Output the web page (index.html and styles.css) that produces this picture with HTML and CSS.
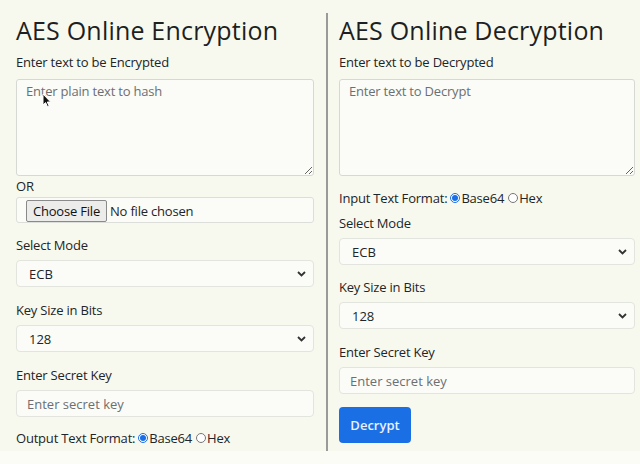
FILE: index.html
```html
<!DOCTYPE html>
<html lang="en">
<head>
<meta charset="utf-8">
<title>AES Online Encryption and Decryption</title>
<link rel="stylesheet" href="styles.css">
</head>
<body>
<main class="tool">
  <section class="col col-enc">
    <h1 class="title">AES Online Encryption</h1>
    <label class="lbl lbl-top" for="plain">Enter text to be Encrypted</label>
    <div class="area-wrap">
      <textarea id="plain" class="area" placeholder="Enter plain text to hash"></textarea>
      <svg class="cursor" width="10" height="16" viewBox="0 0 10 16"><path d="M1 1 L1 12 L3.6 9.6 L5.6 14 L7.2 13.3 L5.3 9 L8.6 9 Z" fill="#111" stroke="#fff" stroke-width="1"/></svg>
    </div>
    <div class="lbl">OR</div>
    <div class="filebox"><span class="filebtn">Choose File</span><span class="filetext">No file chosen</span></div>
    <div class="field field-mode">
      <label class="lbl" for="mode1">Select Mode</label>
      <div class="sel-wrap">
        <select id="mode1" class="sel"><option>ECB</option></select>
        <svg class="chev" width="9" height="6" viewBox="0 0 9 6"><path d="M1 1 L4.5 4.5 L8 1" fill="none" stroke="#333" stroke-width="1.8"/></svg>
      </div>
    </div>
    <div class="field">
      <label class="lbl" for="size1">Key Size in Bits</label>
      <div class="sel-wrap">
        <select id="size1" class="sel"><option>128</option></select>
        <svg class="chev" width="9" height="6" viewBox="0 0 9 6"><path d="M1 1 L4.5 4.5 L8 1" fill="none" stroke="#333" stroke-width="1.8"/></svg>
      </div>
    </div>
    <div class="field">
      <label class="lbl" for="key1">Enter Secret Key</label>
      <input id="key1" class="inp" type="text" placeholder="Enter secret key">
    </div>
    <div class="radios radios-out">
      <span>Output Text Format:</span>
      <input type="radio" name="out" checked><span class="opt">Base64</span>
      <input type="radio" name="out"><span>Hex</span>
    </div>
  </section>
  <section class="col col-dec">
    <h1 class="title">AES Online Decryption</h1>
    <label class="lbl lbl-top" for="cipher">Enter text to be Decrypted</label>
    <div class="area-wrap">
      <textarea id="cipher" class="area" placeholder="Enter text to Decrypt"></textarea>
    </div>
    <div class="radios radios-in">
      <span>Input Text Format:</span>
      <input type="radio" name="in" checked><span class="opt">Base64</span>
      <input type="radio" name="in"><span>Hex</span>
    </div>
    <div class="field field-tight">
      <label class="lbl" for="mode2">Select Mode</label>
      <div class="sel-wrap">
        <select id="mode2" class="sel"><option>ECB</option></select>
        <svg class="chev" width="9" height="6" viewBox="0 0 9 6"><path d="M1 1 L4.5 4.5 L8 1" fill="none" stroke="#333" stroke-width="1.8"/></svg>
      </div>
    </div>
    <div class="field field-mid">
      <label class="lbl" for="size2">Key Size in Bits</label>
      <div class="sel-wrap">
        <select id="size2" class="sel"><option>128</option></select>
        <svg class="chev" width="9" height="6" viewBox="0 0 9 6"><path d="M1 1 L4.5 4.5 L8 1" fill="none" stroke="#333" stroke-width="1.8"/></svg>
      </div>
    </div>
    <div class="field">
      <label class="lbl" for="key2">Enter Secret Key</label>
      <input id="key2" class="inp" type="text" placeholder="Enter secret key">
    </div>
    <button class="btn" type="button">Decrypt</button>
  </section>
</main>
<footer class="foot"></footer>
</body>
</html>
```

FILE: styles.css
```css
* { box-sizing: border-box; }
html, body { margin: 0; padding: 0; }
body {
  background: #f8f9ee;
  font-family: "Open Sans", "DejaVu Sans", sans-serif;
  color: #212529;
  font-size: 13px;
  letter-spacing: -0.2px;
  height: 464px;
  overflow: hidden;
}
.tool {
  display: grid;
  grid-template-columns: 328px 1fr;
  padding-top: 13px;
  height: 451px;
}
.col { display: flex; flex-direction: column; }
.col-enc {
  padding: 0 12px 0 16px;
  border-right: 2px solid #9a9a9a;
}
.col-dec { padding: 0 5px 0 11px; }
.title {
  margin: 0;
  font-size: 25px;
  font-weight: 500;
  letter-spacing: 0.2px;
  line-height: 34px;
  color: #1d1f22;
  white-space: nowrap;
}
.lbl {
  display: block;
  line-height: 20px;
  font-size: 13px;
  margin: 0;
  white-space: nowrap;
}
.lbl-top { margin: 5px 0 7px; }
.area-wrap { position: relative; }
.area {
  display: block;
  width: 100%;
  height: 97px;
  border: 1px solid #d6d8d4;
  border-radius: 3px;
  background: #fbfcf7;
  padding: 2px 9px;
  font: inherit;
  font-size: 13px;
  letter-spacing: -0.2px;
  color: #212529;
  resize: vertical;
}
.area::placeholder, .inp::placeholder { color: #6b6f73; opacity: 1; }
.cursor { position: absolute; left: 26px; top: 14px; }
.filebox {
  margin-top: 1px;
  height: 26px;
  border: 1px solid #dcdeda;
  border-radius: 3px;
  background: #fbfcf7;
  display: flex;
  align-items: flex-end;
  padding: 0 0 0 9px;
  gap: 3px;
}
.filebtn {
  height: 22px;
  width: 81px;
  border: 1px solid #8a8a8a;
  border-radius: 2px;
  background: #ececea;
  color: #111;
  font-size: 13px;
  line-height: 20px;
  text-align: center;
}
.filetext { line-height: 22px; color: #212529; }
.field { margin-top: 13px; }
.field-mode { margin-top: 12px; }
.field-tight { margin-top: 5px; }
.field-mid { margin-top: 12px; }
.field .lbl { margin-bottom: 5px; }
.sel-wrap { position: relative; }
.sel {
  display: block;
  width: 100%;
  height: 27px;
  appearance: none;
  -webkit-appearance: none;
  border: 1px solid #e2e4de;
  border-radius: 4px;
  background: #fbfcf7;
  font: inherit;
  font-size: 13px;
  color: #212529;
  padding: 0 0 0 12px;
}
.chev { position: absolute; right: 8px; top: 11px; pointer-events: none; }
.inp {
  display: block;
  width: 100%;
  height: 27px;
  border: 1px solid #e2e4de;
  border-radius: 4px;
  background: #fbfcf7;
  font: inherit;
  font-size: 13px;
  padding: 0 10px;
  color: #212529;
}
.radios {
  display: flex;
  align-items: center;
  line-height: 20px;
  white-space: nowrap;
}
.radios input {
  width: 10px;
  height: 10px;
  margin: 0 1px 0 3px;
  accent-color: #1a6ee6;
}
.radios .opt { margin-right: 1px; }
.radios-out { margin-top: 11px; }
.radios-in { margin-top: 12px; }
.btn {
  align-self: flex-start;
  margin-top: 13px;
  height: 36px;
  width: 72px;
  border: 0;
  border-radius: 4px;
  background: #1b6fe4;
  color: #e9f1ff;
  font: inherit;
  font-size: 13px;
  font-weight: 600;
}
.foot {
  height: 13px;
  background: #fbfcf6;
}
```
